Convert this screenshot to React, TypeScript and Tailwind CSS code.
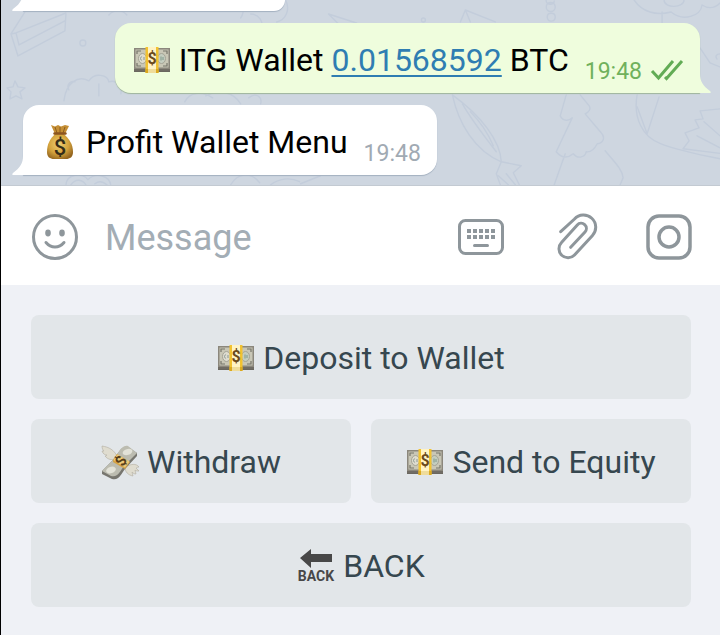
import React, { useState } from "react";

function Banknote() {
  return (
    <svg viewBox="0 0 38 26" className="h-[26px] w-[38px] shrink-0" aria-hidden="true">
      <rect x="1" y="2" width="36" height="23" fill="#77736a" />
      <rect x="1" y="1" width="36" height="21" fill="#8b877c" />
      <rect x="2.5" y="2.5" width="33" height="18" fill="#c9c7b6" />
      <path
        d="M4 7V4h4M34 7V4h-4M4 16v3h4M34 16v3h-4"
        fill="none"
        stroke="#77766b"
        strokeWidth="1.2"
      />
      <ellipse cx="9.5" cy="11.5" rx="4" ry="5" fill="#dedccf" stroke="#a5a496" />
      <path d="M9 9.5c-2 1-2 3 0 4M11 10v3" stroke="#8b9892" fill="none" />
      <ellipse cx="28.5" cy="11.5" rx="4" ry="5" fill="#c4cdbf" stroke="#a5a496" />
      <path d="M28 9.5v4M30 10v3" stroke="#7d988a" fill="none" />
      <path d="M1 23h36M1 24.5h36" stroke="#625f57" strokeWidth="0.6" />
      <rect x="12.5" y="0" width="13" height="26" fill="#f2c230" />
      <rect x="15" y="0" width="8" height="22" fill="#fff3c4" />
      <path d="M12.5 22h13v4h-13z" fill="#dba91f" />
      <path d="M15 22h8v4h-8z" fill="#efdc9a" />
      <text
        x="19"
        y="17"
        textAnchor="middle"
        className="font-['Roboto',sans-serif] text-[16px] font-bold"
        fill="#6b4a1c"
      >
        $
      </text>
    </svg>
  );
}

function MoneyBag() {
  return (
    <svg viewBox="0 0 28 36" className="h-[36px] w-[28px] shrink-0" aria-hidden="true">
      <defs>
        <radialGradient id="bag" cx="0.45" cy="0.4" r="0.65">
          <stop offset="0" stopColor="#efcf73" />
          <stop offset="0.6" stopColor="#d3a23c" />
          <stop offset="1" stopColor="#94651f" />
        </radialGradient>
      </defs>
      <path
        d="M9 10C4 15 1 20 1 28c0 5 3 7 7 7h12c4 0 7-2 7-7 0-8-4-13-9-18z"
        fill="url(#bag)"
      />
      <path d="M5 1l4 1.5L12 1l3 1.5L19 1l4 1-4 8H9z" fill="#c58f35" />
      <path d="M9 3l2 6M14 3v6M19 3l-2 6" stroke="#8c5d20" />
      <path d="M8.5 9.5h11" stroke="#8c5520" strokeWidth="2.4" strokeLinecap="round" />
      <text
        x="14"
        y="31"
        textAnchor="middle"
        className="font-['Roboto',sans-serif] text-[22px] font-medium"
        fill="#352d18"
      >
        $
      </text>
    </svg>
  );
}

function FlyingMoney() {
  return (
    <svg viewBox="0 0 38 36" className="h-[36px] w-[38px] shrink-0" aria-hidden="true">
      <path
        d="M16 12C13 6 8 3 1 2c0 3 1 4 2 5H1c1 3 3 4 5 4-1 1-2 1-2 1 3 4 7 4 10 3z"
        fill="#dfdccf"
        stroke="#b1ada0"
        strokeWidth="0.6"
      />
      <path
        d="M24 23c6-3 11-4 14 0-2 0-2 1-3 1l3 3c-2 0-3 0-4-1l1 4c-2 0-3-1-4-2l1 4c-5-1-8-4-8-9z"
        fill="#dfdccf"
        stroke="#b1ada0"
        strokeWidth="0.6"
      />
      <path d="M1 27l10-10c5-5 9-16 16-14l9 6v3L24 25c-4 5-6 12-13 10L1 30z" fill="#77766f" />
      <path d="M1 27l10-10c5-5 9-17 16-15l9 7-13 13c-4 5-6 12-13 10z" fill="#bcbcb0" />
      <ellipse cx="26.5" cy="8" rx="5" ry="3" transform="rotate(-18 26.5 8)" fill="#e2e2d8" />
      <ellipse cx="10" cy="26" rx="5" ry="3.2" transform="rotate(-18 10 26)" fill="#e2e2d8" />
      <path d="M12 16l4-6 13 8-5 7-12-7z" fill="#d3a447" />
      <path d="M12.5 16l4-5.5 12 7-4.5 6z" fill="#edc977" />
      <text
        x="20"
        y="22"
        textAnchor="middle"
        transform="rotate(-58 20 17)"
        className="font-['Roboto',sans-serif] text-[15px] font-bold"
        fill="#563f1c"
      >
        $
      </text>
    </svg>
  );
}

function BackArrow() {
  return (
    <svg viewBox="0 0 38 36" className="h-[36px] w-[38px] shrink-0" aria-hidden="true">
      <path d="M3 10L14 1v5h21v8H14v6z" fill="#484848" />
      <text
        x="19"
        y="33"
        textAnchor="middle"
        className="font-['Roboto',sans-serif] text-[14px] font-bold"
        fill="#484848"
      >
        BACK
      </text>
    </svg>
  );
}

function Wallpaper() {
  return (
    <svg
      viewBox="0 0 720 186"
      preserveAspectRatio="xMinYMin slice"
      className="absolute inset-0 h-full w-full"
      fill="none"
      stroke="#c3cddb"
      strokeWidth="1.4"
      strokeLinecap="round"
      strokeLinejoin="round"
      aria-hidden="true"
    >
      <path d="M10 34L24 12M10 34l7 22 47-25 1-17M10 34l5-1 50-20M15 33l3 12 46-24" />
      <circle cx="82" cy="43" r="3" />
      <path d="M14 81l3 6 7 1-5 4 2 7-6-3-6 3 1-7-4-4 6-1z" />
      <path d="M63 101c2-18 14-26 25-20 6-9 19-6 20 1 8-3 14 6 12 12M68 90c-3-5 2-10 6-8M98 84v12" />
      <path d="M108 15c5-6 14-5 18 0M240 18c4-5 3-13 3-18M250 14c8 0 14 8 10 16M276 22c9-2 14-12 9-22M328 14l28 9M328 14l10 10" />
      <path d="M184 102c5-10 17-11 28-4M205 96c13-7 28-4 35 8M248 98c7-6 14-1 12 6" />
      <path d="M65 186c0-12 17-14 22-6 8-8 22-4 23 6M70 185c5-7 12-5 15 0M94 184c5-4 10-1 13 2" />
      <path d="M230 185c7-12 21-13 29-2M270 185c8-6 19-8 29-3M300 184l20-8" />
      <circle cx="423" cy="20" r="2" />
      <path d="M460 22l5-12 30 12M465 10l5 12" />
      <path d="M546 0c-1 5 8 6 8 1M546 7c0 6 9 6 9 0s-9-6-9 0zM547 17c0-5 8-5 8 0s-8 6-8 0z" />
      <path d="M634 0c8 12 22 16 37 12 12 10 30 4 31-7 8 5 14 2 18-2M664 0c0 9 20 8 20 0M662 12v11" />
      <path d="M452 95c6 28 22 56 49 67-1-21-20-46-49-67zM462 104c8 14 20 30 34 48M470 112c8 8 17 20 23 34" />
      <path d="M501 162l20 4-8 7 6 12M501 162l-5 12 4 11M506 174l9 11M498 176l10 9" />
      <path d="M566 95l-6 21c3 6 9 5 12 2l-16 34c5 6 11 7 17 2 5 6 12 3 13-2 6 1 9-4 11-8 7-1 8-7 4-11l-16-19c4-2 6-5 4-8l-9-11M565 154l-11 31M605 151c8 10 17 18 18 27l-3 7" />
      <path d="M637 95c-4 22 5 43 24 49 13 5 34 10 59 15M659 97l-12 37-10-27M720 109l-20 2 3 8-8 1 4 8-14 5 4 8-6 8 40 5M704 122l16 14M697 136l23 12M700 48l10 15 10 4M720 54c-4 0-5 3-3 5" />
    </svg>
  );
}

function Checks() {
  return (
    <svg
      viewBox="0 0 34 22"
      className="h-[22px] w-[34px]"
      fill="none"
      stroke="#62ac55"
      strokeWidth="3"
      role="img"
      aria-label="Read"
    >
      <path d="M2 12l6.5 7L23 2M15 18l1.5 1.5L32 2" />
    </svg>
  );
}

function Tail({ side }: { side: "left" | "right" }) {
  return (
    <svg
      viewBox="0 0 12 24"
      className={
        side === "left"
          ? "absolute bottom-0 -left-[11px] h-6 w-3"
          : "absolute bottom-0 -right-[11px] h-6 w-3 -scale-x-100"
      }
      fill={side === "left" ? "#ffffff" : "#effddd"}
      aria-hidden="true"
    >
      <path d="M12 0h-1v5c0 7-3 12-10 17-1 1-1 2 0 2h11z" />
    </svg>
  );
}

function KeyButton({ icon, label }: { icon: React.ReactNode; label: string }) {
  return (
    <button
      type="button"
      className="flex h-[84px] w-full cursor-pointer items-center justify-center gap-2 rounded-lg bg-[#e2e6e9] pt-0.5 text-[32px] whitespace-nowrap text-[#36474f]"
    >
      {icon}
      <span>{label}</span>
    </button>
  );
}

function App() {
  const [message, setMessage] = useState("");

  return (
    <div className="min-h-screen border-l border-black bg-[#eff1f6] font-['Roboto',sans-serif]">
      <div className="relative overflow-hidden border-b border-[#c3cad2] bg-[#ced6e0] pb-[10px]">
        <Wallpaper />
        <div className="relative flex flex-col gap-3 pr-5 pl-[22px]">
          <div className="relative h-[11px] w-[262px] rounded-br-2xl bg-white shadow-[0_1px_1px_#a4b1c0]">
            <Tail side="left" />
          </div>
          <div className="relative flex h-[70px] items-center self-end rounded-2xl rounded-br-none bg-[#effddd] pt-1 pr-4 pl-[18px] whitespace-nowrap shadow-[0_1px_1px_#9fb59c]">
            <Banknote />
            <p className="ml-2 text-[32px] leading-10 text-black">
              ITG Wallet{" "}
              <a href="#amount" className="text-[#2f7db2] underline decoration-2 underline-offset-4">
                0.01568592
              </a>{" "}
              BTC
            </p>
            <span className="mt-6 ml-4 text-[23px] text-[#70b15c]">19:48</span>
            <span className="mt-5 ml-2">
              <Checks />
            </span>
            <Tail side="right" />
          </div>
          <div className="relative flex h-[70px] items-center self-start rounded-2xl rounded-bl-none bg-white pt-1 pr-4 pl-[23px] whitespace-nowrap shadow-[0_1px_1px_#a4b1c0]">
            <MoneyBag />
            <p className="ml-3 text-[32px] leading-10 text-black">Profit Wallet Menu</p>
            <span className="mt-6 ml-4 text-[23px] text-[#a1aab3]">19:48</span>
            <Tail side="left" />
          </div>
        </div>
      </div>

      <div className="flex h-[99px] items-center bg-white pt-0.5 pr-[27px] pl-[30px] text-[#8e969b]">
        <button type="button" aria-label="Emoji" className="cursor-pointer">
          <svg viewBox="0 0 48 48" className="h-12 w-12" fill="none" stroke="currentColor">
            <circle cx="24" cy="24" r="21.5" strokeWidth="3" />
            <ellipse cx="17" cy="20" rx="2.8" ry="3.4" fill="currentColor" stroke="none" />
            <ellipse cx="31" cy="20" rx="2.8" ry="3.4" fill="currentColor" stroke="none" />
            <path d="M15 29.5c5 6 13 6 18 0" strokeWidth="3" strokeLinecap="round" />
          </svg>
        </button>
        <input
          type="text"
          aria-label="Message"
          placeholder="Message"
          value={message}
          onChange={(e) => setMessage(e.target.value)}
          className="ml-[26px] h-12 min-w-0 flex-1 pt-0.5 text-[36px] text-black outline-none placeholder:text-[#a3adb5]"
        />
        <div className="flex items-center gap-[46px]">
          <button type="button" aria-label="Bot keyboard" className="cursor-pointer">
            <svg viewBox="0 0 48 48" className="h-12 w-12" fill="none" stroke="currentColor">
              <rect x="2.5" y="7.5" width="43" height="33" rx="6" strokeWidth="3" />
              <path d="M10 18h28M10 24h28" strokeWidth="4" strokeDasharray="4 2" />
              <path d="M17.5 32.5h13" strokeWidth="3" strokeLinecap="round" />
            </svg>
          </button>
          <button type="button" aria-label="Attach" className="cursor-pointer">
            <svg
              viewBox="-2 0 48 48"
              className="h-12 w-12"
              fill="none"
              stroke="currentColor"
              strokeWidth="3"
              strokeLinecap="round"
            >
              <path d="M7.7 18.7L21.5 6A12 12 0 0 1 39.5 22.5L21.5 42A9 9 0 0 1 8.5 29.5L24.3 12A5.2 5.2 0 0 1 32 19L17.7 34.3" />
            </svg>
          </button>
          <button type="button" aria-label="Record video" className="cursor-pointer">
            <svg
              viewBox="0 0 48 48"
              className="h-12 w-12"
              fill="none"
              stroke="currentColor"
              strokeWidth="3.5"
            >
              <rect x="3" y="3" width="42" height="42" rx="11" />
              <circle cx="24" cy="24" r="10" />
            </svg>
          </button>
        </div>
      </div>

      <div className="grid grid-cols-2 gap-5 pt-[30px] pr-[29px] pb-7 pl-[30px]">
        <div className="col-span-2">
          <KeyButton icon={<Banknote />} label="Deposit to Wallet" />
        </div>
        <KeyButton icon={<FlyingMoney />} label="Withdraw" />
        <KeyButton icon={<Banknote />} label="Send to Equity" />
        <div className="col-span-2">
          <KeyButton icon={<BackArrow />} label="BACK" />
        </div>
      </div>
    </div>
  );
}

export default App;
